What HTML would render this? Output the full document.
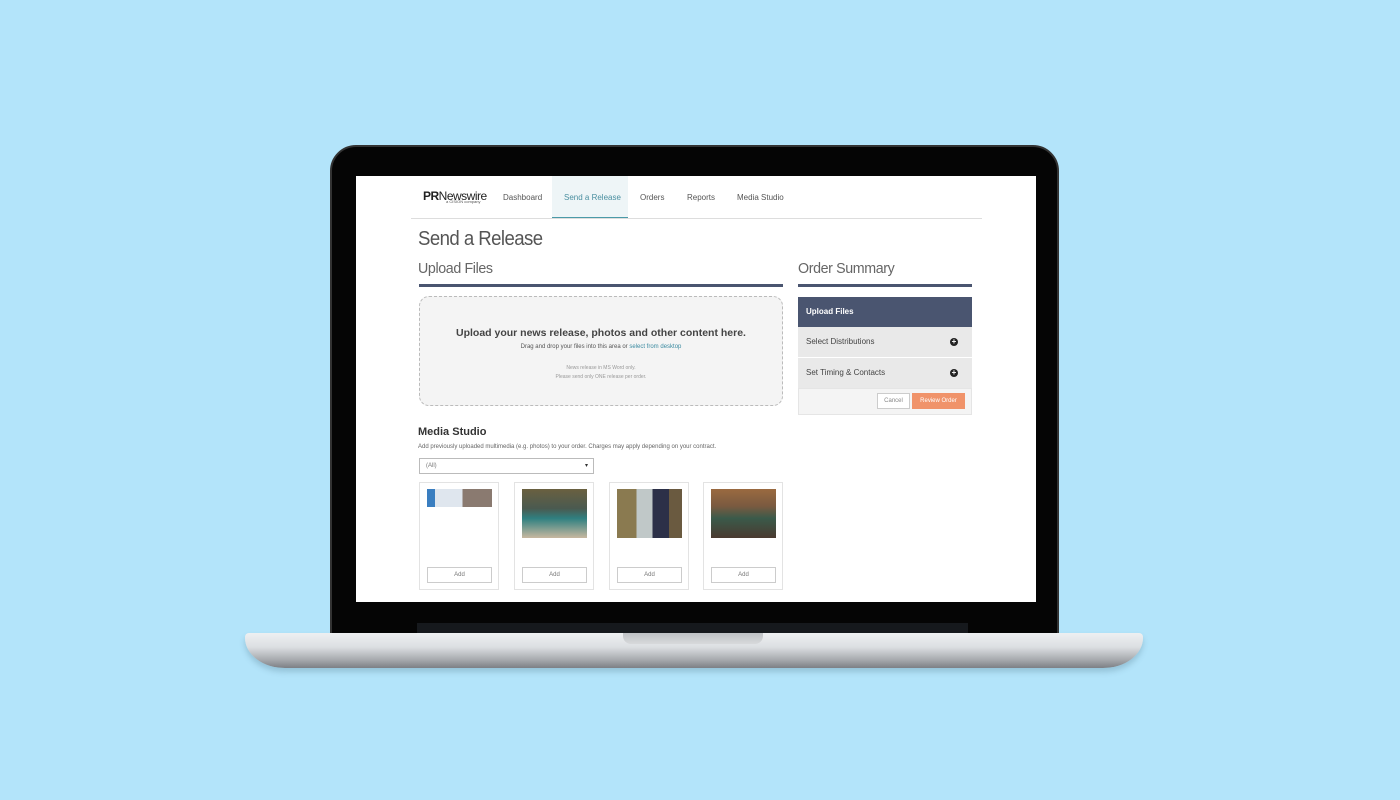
<!DOCTYPE html>
<html><head><style>
*{margin:0;padding:0;box-sizing:border-box}
body{width:1400px;height:800px;background:#b3e4fa;position:relative;overflow:hidden;font-family:"Liberation Sans",sans-serif;color:#333}
.a{position:absolute}
.bezel{left:330px;top:145px;width:729px;height:490px;background:#050505;border-radius:26px 26px 0 0;border:2px solid #333}
.screen{left:356px;top:176px;width:680px;height:426px;background:#fff;overflow:hidden}
.base{left:245px;top:633px;width:898px;height:35px;border-radius:4px 4px 40px 40px/4px 4px 30px 30px;background:linear-gradient(#eef0f2 0,#dcdfe2 40%,#a9acb0 75%,#7d8085 100%);box-shadow:0 4px 6px rgba(80,120,140,.3)}
.notch{left:623px;top:633px;width:140px;height:11px;background:linear-gradient(#bfc2c5,#d7d9db);border-radius:0 0 8px 8px}
.hinge{left:417px;top:623px;width:551px;height:10px;background:#16191d}
.nav{font-size:8px;color:#555}
.row{position:absolute;left:442px;width:174px;height:30px;font-size:8px;line-height:30px;padding-left:8px;background:#e9e9e9;color:#444}
.plus{position:absolute;right:14px;top:11px;width:8px;height:8px;border-radius:50%;background:#222;color:#fff;font-size:8px;line-height:8px;text-align:center;font-weight:bold}
.card{position:absolute;top:306px;width:80px;height:108px;border:1px solid #e3e3e3;background:#fff}
.card .img{position:absolute;left:7px;top:6px;width:65px;height:49px}
.card .add{position:absolute;left:7px;top:84px;width:65px;height:16px;border:1px solid #ccc;font-size:6px;text-align:center;line-height:14px;color:#777}
</style></head><body>
<div class="a bezel"></div>
<div class="a hinge"></div>
<div class="a screen">
  <div class="a" style="left:67px;top:13px;font-size:12px;font-weight:bold;letter-spacing:-.5px;color:#222">PR<span style="font-weight:normal">Newswire</span></div>
  <div class="a" style="left:90px;top:23px;font-size:4px;color:#555">a CISION company</div>
  <div class="a nav" style="left:147px;top:17px">Dashboard</div>
  <div class="a" style="left:196px;top:0;width:76px;height:43px;background:#eef5f7;border-bottom:2px solid #4a9aa8"></div>
  <div class="a nav" style="left:208px;top:17px;color:#4a8fa0">Send a Release</div>
  <div class="a nav" style="left:284px;top:17px">Orders</div>
  <div class="a nav" style="left:331px;top:17px">Reports</div>
  <div class="a nav" style="left:381px;top:17px">Media Studio</div>
  <div class="a" style="left:55px;top:42px;width:571px;height:1px;background:#ddd"></div>
  <div class="a" style="left:62px;top:52px;font-size:20px;color:#555;letter-spacing:-.6px;transform:scaleX(.93);transform-origin:left">Send a Release</div>
  <div class="a" style="left:62px;top:84px;font-size:15px;color:#666;letter-spacing:-.4px;transform:scaleX(.95);transform-origin:left">Upload Files</div>
  <div class="a" style="left:63px;top:108px;width:364px;height:3px;background:#4a5570"></div>
  <div class="a" style="left:442px;top:84px;font-size:15px;color:#666;letter-spacing:-.4px;transform:scaleX(.95);transform-origin:left">Order Summary</div>
  <div class="a" style="left:442px;top:108px;width:174px;height:3px;background:#4a5570"></div>
  <div class="a" style="left:63px;top:120px;width:364px;height:110px;border:1px dashed #bbb;border-radius:10px;background:#f4f4f4;text-align:center">
    <div style="margin-top:30px;font-size:10.5px;font-weight:bold;color:#444">Upload your news release, photos and other content here.</div>
    <div style="margin-top:5px;font-size:6px;color:#555">Drag and drop your files into this area or <span style="color:#3a8aa0">select from desktop</span></div>
    <div style="margin-top:14px;font-size:5px;color:#999;line-height:9px">News release in MS Word only.<br>Please send only ONE release per order.</div>
  </div>
  <div class="row" style="top:121px;background:#4a5570;color:#fff;font-weight:bold">Upload Files</div>
  <div class="row" style="top:151px">Select Distributions<span class="plus">+</span></div>
  <div class="row" style="top:182px">Set Timing &amp; Contacts<span class="plus">+</span></div>
  <div class="row" style="top:212px;height:27px;background:#f4f4f4;border:1px solid #e5e5e5"></div>
  <div class="a" style="left:521px;top:217px;width:33px;height:16px;border:1px solid #ccc;background:#fff;font-size:6px;color:#888;text-align:center;line-height:14px">Cancel</div>
  <div class="a" style="left:556px;top:217px;width:53px;height:16px;background:#f0936a;font-size:6px;color:#fff;text-align:center;line-height:16px">Review Order</div>
  <div class="a" style="left:62px;top:250px;font-size:11px;font-weight:bold;color:#333">Media Studio</div>
  <div class="a" style="left:62px;top:268px;font-size:6px;color:#666">Add previously uploaded multimedia (e.g. photos) to your order. Charges may apply depending on your contract.</div>
  <div class="a" style="left:63px;top:282px;width:175px;height:16px;border:1px solid #bbb;font-size:6px;color:#777;line-height:14px;padding-left:6px">(All)<span style="position:absolute;right:5px;color:#333">▾</span></div>
  <div class="card" style="left:63px"><div class="img" style="height:18px;background:linear-gradient(90deg,#3a7ec0 0 12%,#dfe6ee 12% 55%,#8a7a70 55%)"></div><div class="add">Add</div></div>
  <div class="card" style="left:158px"><div class="img" style="background:linear-gradient(#6a6040 0,#4a5a50 40%,#2f8080 60%,#c8b8a0 100%)"></div><div class="add">Add</div></div>
  <div class="card" style="left:253px"><div class="img" style="background:linear-gradient(90deg,#8a7a50 0 30%,#c0c8c8 30% 55%,#2c3048 55% 80%,#6a5a40 80%)"></div><div class="add">Add</div></div>
  <div class="card" style="left:347px"><div class="img" style="background:linear-gradient(#9a6a40 0,#7a5a40 35%,#3a5a4a 60%,#4a3a30 100%)"></div><div class="add">Add</div></div>
</div>
<div class="a base"></div>
<div class="a notch"></div>
</body></html>
